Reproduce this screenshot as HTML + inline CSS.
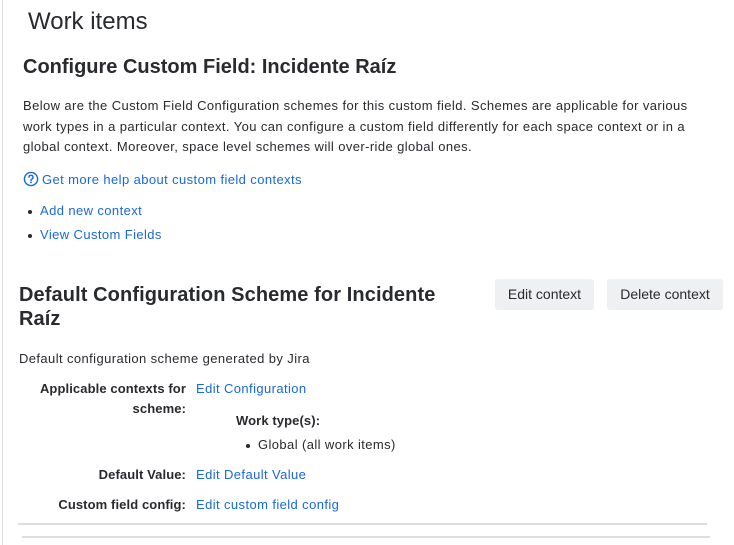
<!DOCTYPE html>
<html><head><meta charset="utf-8"><style>
*{margin:0;padding:0;box-sizing:border-box}
body{width:734px;height:545px;background:#fff;font-family:"Liberation Sans",sans-serif;color:#292a2e;position:relative;overflow:hidden;font-size:13px}
.a{position:absolute;white-space:nowrap;letter-spacing:0.4px}
a{color:#1868db;text-decoration:none}
.b{font-weight:bold}
.btn{position:absolute;background:#eef0f2;border-radius:3px;height:31px;line-height:31px;text-align:center;font-size:14px;color:#292a2e}
.r{position:absolute;right:548px;text-align:right;font-weight:bold;white-space:nowrap;letter-spacing:0.1px}
.dot{display:inline-block;width:4px;height:4px;border-radius:50%;background:#292a2e;vertical-align:middle;margin-right:8px}
.h{letter-spacing:0}
</style></head><body>
<div style="position:absolute;left:2px;top:0;width:1px;height:545px;background:#ddd"></div>
<div class="a h" style="left:28px;top:6px;font-size:24px;line-height:32px">Work items</div>
<div class="a b h" style="left:23px;top:54px;font-size:20px;line-height:26px">Configure Custom Field: Incidente Raíz</div>
<div class="a" style="left:23px;top:96px;line-height:20.5px;font-size:13px">Below are the Custom Field Configuration schemes for this custom field. Schemes are applicable for various<br>work types in a particular context. You can configure a custom field differently for each space context or in a<br>global context. Moreover, space level schemes will over-ride global ones.</div>
<div class="a" style="left:23px;top:171px;line-height:18px"><svg width="16" height="16" viewBox="0 0 16 16" style="vertical-align:-3px;margin-right:3px"><circle cx="8" cy="8" r="6.6" fill="none" stroke="#1868db" stroke-width="1.4"/><path d="M6 6.3a2 2 0 1 1 2.6 1.9c-.5.2-.6.5-.6 1v.4" fill="none" stroke="#1868db" stroke-width="1.4" stroke-linecap="round"/><circle cx="8" cy="11.4" r=".9" fill="#1868db"/></svg><a>Get more help about custom field contexts</a></div>
<div class="a" style="left:28px;top:202px;line-height:18px"><span class="dot"></span><a>Add new context</a></div>
<div class="a" style="left:28px;top:226px;line-height:18px"><span class="dot"></span><a>View Custom Fields</a></div>
<div class="a b" style="left:19px;top:283px;font-size:20px;line-height:24px;letter-spacing:0.1px">Default Configuration Scheme for Incidente<br>Raíz</div>
<div class="btn" style="left:495px;top:279px;width:99px">Edit context</div>
<div class="btn" style="left:607px;top:279px;width:116px">Delete context</div>
<div class="a" style="left:19px;top:350px;line-height:18px">Default configuration scheme generated by Jira</div>
<div class="r" style="top:379px;line-height:20px">Applicable contexts for<br>scheme:</div>
<div class="a" style="left:196px;top:380px;line-height:18px"><a>Edit Configuration</a></div>
<div class="a b" style="left:236px;top:412px;line-height:18px;letter-spacing:0.1px">Work type(s):</div>
<div class="a" style="left:246px;top:436px;line-height:18px"><span class="dot"></span>Global (all work items)</div>
<div class="r" style="top:466px;line-height:18px">Default Value:</div>
<div class="a" style="left:196px;top:466px;line-height:18px"><a>Edit Default Value</a></div>
<div class="r" style="top:496px;line-height:18px">Custom field config:</div>
<div class="a" style="left:196px;top:496px;line-height:18px"><a>Edit custom field config</a></div>
<div style="position:absolute;left:18px;top:523px;width:689px;height:2px;background:#ddd"></div>
<div style="position:absolute;left:22px;top:536px;width:688px;height:2px;background:#ddd"></div>
</body></html>
